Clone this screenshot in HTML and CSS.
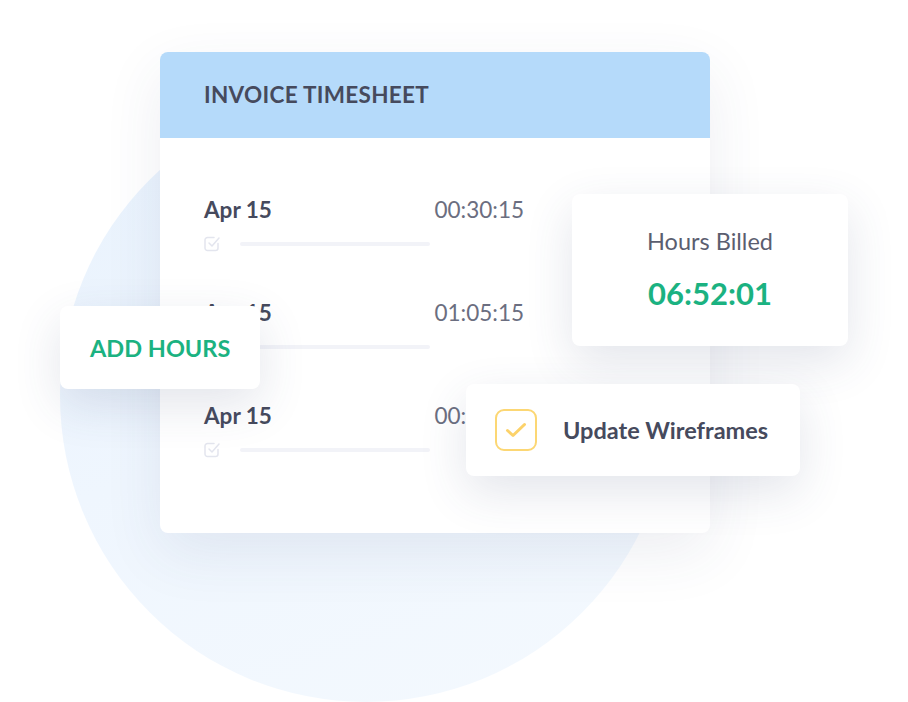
FILE: index.html
```html
<!DOCTYPE html>
<html>
<head>
<meta charset="utf-8">
<link rel="stylesheet" href="styles.css">
</head>
<body>
<div class="stage">
  <div class="circle"></div>
  <div class="sheet">
    <div class="sheet-head">INVOICE TIMESHEET</div>
    <div class="sheet-body">
      <div class="row">
        <div class="row-top"><span class="date">Apr 15</span><span class="time">00:30:15</span></div>
        <div class="row-bottom">
          <svg class="tick" width="17" height="17" viewBox="0 0 17 17"><path d="M14 8.5V13a2.5 2.5 0 0 1-2.5 2.5h-8A2.5 2.5 0 0 1 1 13V5A2.5 2.5 0 0 1 3.5 2.5H10" fill="none" stroke="#e3e5ee" stroke-width="1.5" stroke-linecap="round"/><path d="M5 8l3 3 7-8" fill="none" stroke="#e3e5ee" stroke-width="1.5" stroke-linecap="round" stroke-linejoin="round"/></svg>
          <span class="bar"></span>
        </div>
      </div>
      <div class="row">
        <div class="row-top"><span class="date">Apr 15</span><span class="time">01:05:15</span></div>
        <div class="row-bottom">
          <svg class="tick" width="17" height="17" viewBox="0 0 17 17"><path d="M14 8.5V13a2.5 2.5 0 0 1-2.5 2.5h-8A2.5 2.5 0 0 1 1 13V5A2.5 2.5 0 0 1 3.5 2.5H10" fill="none" stroke="#e3e5ee" stroke-width="1.5" stroke-linecap="round"/><path d="M5 8l3 3 7-8" fill="none" stroke="#e3e5ee" stroke-width="1.5" stroke-linecap="round" stroke-linejoin="round"/></svg>
          <span class="bar"></span>
        </div>
      </div>
      <div class="row">
        <div class="row-top"><span class="date">Apr 15</span><span class="time">00:45:20</span></div>
        <div class="row-bottom">
          <svg class="tick" width="17" height="17" viewBox="0 0 17 17"><path d="M14 8.5V13a2.5 2.5 0 0 1-2.5 2.5h-8A2.5 2.5 0 0 1 1 13V5A2.5 2.5 0 0 1 3.5 2.5H10" fill="none" stroke="#e3e5ee" stroke-width="1.5" stroke-linecap="round"/><path d="M5 8l3 3 7-8" fill="none" stroke="#e3e5ee" stroke-width="1.5" stroke-linecap="round" stroke-linejoin="round"/></svg>
          <span class="bar"></span>
        </div>
      </div>
    </div>
  </div>
  <div class="card add-hours">ADD HOURS</div>
  <div class="card billed">
    <div class="billed-label">Hours Billed</div>
    <div class="billed-value">06:52:01</div>
  </div>
  <div class="card task">
    <span class="task-check">
      <svg width="24" height="20" viewBox="0 0 24 20"><path d="M3.5 10.5l5.5 5L20.5 4.5" fill="none" stroke="#fcd26a" stroke-width="3" stroke-linecap="round" stroke-linejoin="round"/></svg>
    </span>
    <span class="task-label">Update Wireframes</span>
  </div>
</div>
</body>
</html>
```
FILE: styles.css
```css
* { box-sizing: border-box; }
html, body { margin: 0; padding: 0; background: #ffffff; }
body { font-family: Lato, "Open Sans", sans-serif; color: #464a5d; }

.stage {
  position: relative;
  width: 908px;
  height: 702px;
  overflow: hidden;
}

.circle {
  position: absolute;
  left: 60px;
  top: 90px;
  width: 612px;
  height: 612px;
  border-radius: 50%;
  background: linear-gradient(160deg, #e8f2fd 0%, #eff6fe 50%, #f4f9fe 100%);
}

.sheet {
  position: absolute;
  left: 160px;
  top: 52px;
  width: 550px;
  height: 481px;
  background: #ffffff;
  border-radius: 8px;
  overflow: hidden;
  box-shadow: 0 20px 60px rgba(60, 70, 110, 0.09);
}

.sheet-head {
  height: 86px;
  background: #b5dafa;
  padding-left: 44px;
  padding-bottom: 2px;
  display: flex;
  align-items: center;
  font-size: 22.5px;
  font-weight: 700;
  letter-spacing: 0.3px;
  color: #464a5d;
}

.sheet-body {
  padding: 59px 0 0 44px;
  display: flex;
  flex-direction: column;
}

.row {
  width: 320px;
  height: 103px;
}

.row-top {
  display: flex;
  justify-content: space-between;
  align-items: center;
  height: 24px;
}

.date {
  font-size: 22.5px;
  font-weight: 700;
  color: #464a5d;
}

.time {
  font-size: 22.5px;
  font-weight: 400;
  color: #6b6e80;
}

.row-bottom {
  display: flex;
  align-items: center;
  margin-top: 14px;
  height: 17px;
}

.tick { display: block; }

.bar {
  display: block;
  margin-left: 19px;
  width: 190px;
  height: 4px;
  border-radius: 2px;
  background: #f2f3f8;
}

.card {
  position: absolute;
  background: #ffffff;
  border-radius: 8px;
  box-shadow: 0 16px 48px rgba(60, 70, 110, 0.14);
}

.add-hours {
  left: 60px;
  top: 306px;
  width: 200px;
  height: 83px;
  padding-left: 30px;
  display: flex;
  align-items: center;
  font-size: 23.5px;
  font-weight: 700;
  color: #1bb281;
}

.billed {
  left: 572px;
  top: 194px;
  width: 276px;
  height: 152px;
  display: flex;
  flex-direction: column;
  align-items: center;
  padding-top: 33px;
}

.billed-label {
  font-size: 23.5px;
  font-weight: 400;
  color: #5b5e70;
  line-height: 28px;
}

.billed-value {
  margin-top: 20px;
  font-size: 31px;
  font-weight: 700;
  color: #1bb281;
  line-height: 36px;
}

.task {
  left: 466px;
  top: 384px;
  width: 334px;
  height: 92px;
  display: flex;
  align-items: center;
  padding-left: 29px;
}

.task-check {
  width: 42px;
  height: 42px;
  border: 2px solid #fcd774;
  border-radius: 9px;
  display: flex;
  align-items: center;
  justify-content: center;
}

.task-label {
  margin-left: 26px;
  font-size: 23.5px;
  font-weight: 700;
  color: #464a5d;
}
```
